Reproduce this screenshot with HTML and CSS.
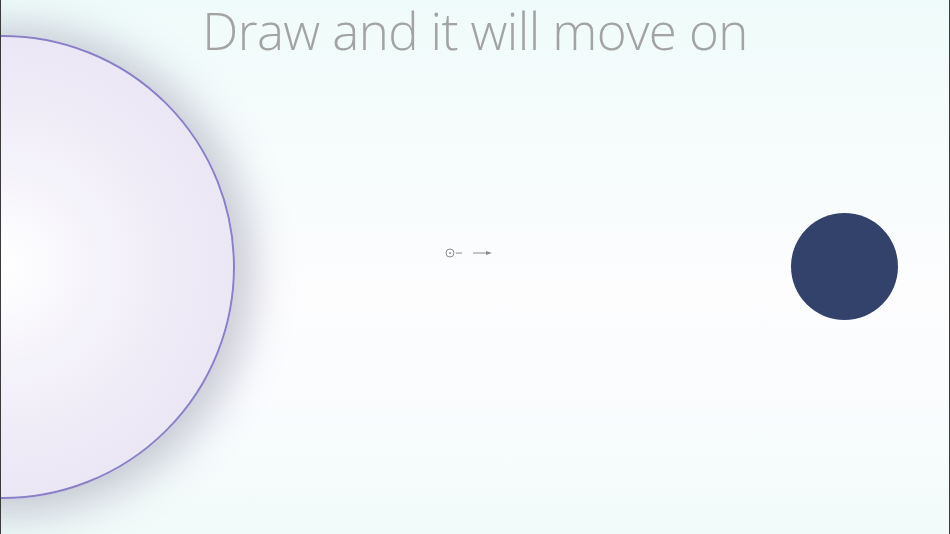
FILE: index.html
```html
<!DOCTYPE html>
<html>
<head>
<meta charset="utf-8">
<link rel="stylesheet" href="styles.css">
</head>
<body>
<div class="stage">
  <h1 class="title">Draw and it will move on</h1>
  <div class="planet"></div>
  <svg class="hint" width="60" height="16" viewBox="0 0 60 16">
    <circle cx="11" cy="8" r="4" fill="none" stroke="#8a8a8a" stroke-width="1"/>
    <circle cx="11" cy="8" r="0.9" fill="#8a8a8a"/>
    <line x1="17" y1="8" x2="23" y2="8" stroke="#8a8a8a" stroke-width="1"/>
    <line x1="34" y1="8" x2="49" y2="8" stroke="#8a8a8a" stroke-width="1"/>
    <path d="M47 6 L53 8 L47 10 Z" fill="#8a8a8a"/>
  </svg>
  <div class="moon"></div>
</div>
</body>
</html>
```
FILE: styles.css
```css
html, body {
  margin: 0;
  padding: 0;
  width: 950px;
  height: 534px;
  overflow: hidden;
}
.stage {
  position: relative;
  width: 950px;
  height: 534px;
  box-sizing: border-box;
  border-left: 1px solid #3a3a3a;
  border-right: 1px solid #3a3a3a;
  background: linear-gradient(to bottom, #effbfa 0%, #f7fcfc 30%, #fdfdfe 55%, #fafcfe 75%, #f1fbf9 100%);
  overflow: hidden;
}
.title {
  margin: 0;
  padding-top: 4px;
  text-align: center;
  font-family: "Open Sans", "Liberation Sans", sans-serif;
  font-weight: 300;
  font-size: 51px;
  line-height: 52px;
  color: #a3a3a3;
  letter-spacing: -0.6px;
}
.planet {
  position: absolute;
  left: -230px;
  top: 35px;
  width: 460px;
  height: 460px;
  border-radius: 50%;
  border: 2px solid #8a80c8;
  background: radial-gradient(circle at 50% 50%, #ffffff 0%, #f5f3fa 30%, #ede9f6 60%, #e6e1f1 100%);
  box-shadow: 6px 4px 40px 12px rgba(140, 140, 165, 0.45);
}
.hint {
  position: absolute;
  left: 438px;
  top: 245px;
}
.moon {
  position: absolute;
  left: 790px;
  top: 213px;
  width: 107px;
  height: 107px;
  border-radius: 50%;
  background: #32426a;
}
```
